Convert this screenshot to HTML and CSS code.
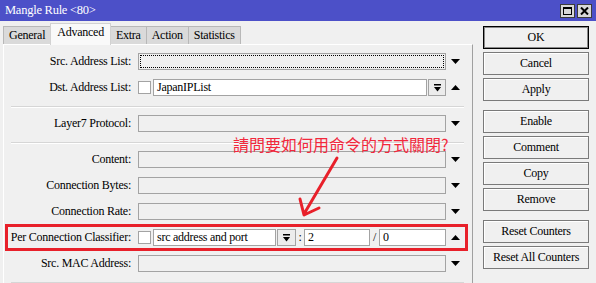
FILE: index.html
```html
<!DOCTYPE html>
<html lang="zh-Hant">
  <head>
    <meta charset="UTF-8" />
    <title>Mangle Rule &lt;80&gt;</title>
    <link rel="stylesheet" href="styles.css">
  </head>
  <body>
    <div class="window">
      <!-- 標題列 -->
      <div class="titlebar">
        <span class="title">Mangle Rule &lt;80&gt;</span>
        <div class="win-btns">
          <span class="win-btn">
            <svg width="9" height="8" viewBox="0 0 9 8"><rect x="0.5" y="0.5" width="8" height="7" fill="none" stroke="#000"/><rect x="0" y="0" width="9" height="2" fill="#000"/></svg>
          </span>
          <span class="win-btn">
            <svg width="9" height="8" viewBox="0 0 9 8"><path d="M1 0.5 L8 7.5 M8 0.5 L1 7.5" stroke="#000" stroke-width="2"/></svg>
          </span>
        </div>
      </div>

      <div class="main">
        <div class="left">
          <ul class="tabs">
            <li class="tab">General</li>
            <li class="tab active">Advanced</li>
            <li class="tab">Extra</li>
            <li class="tab">Action</li>
            <li class="tab">Statistics</li>
          </ul>

          <div class="panel">
            <div class="row">
              <label class="label">Src. Address List:</label>
              <div class="field">
                <span class="input focus"></span>
              </div>
              <span class="spin"><svg width="9" height="5" viewBox="0 0 9 5"><path d="M0 0 H9 L4.5 5 Z"/></svg></span>
            </div>
            <div class="row">
              <label class="label">Dst. Address List:</label>
              <div class="field">
                <span class="check"></span>
                <span class="input white">JapanIPList</span>
                <span class="drop"><svg width="7" height="8" viewBox="0 0 7 8"><rect x="0" y="0" width="7" height="1.5"/><path d="M0 3 H7 L3.5 7.5 Z"/></svg></span>
              </div>
              <span class="spin"><svg width="9" height="5" viewBox="0 0 9 5"><path d="M0 5 H9 L4.5 0 Z"/></svg></span>
            </div>

            <div class="sep"></div>

            <div class="row">
              <label class="label">Layer7 Protocol:</label>
              <div class="field">
                <span class="input"></span>
              </div>
              <span class="spin"><svg width="9" height="5" viewBox="0 0 9 5"><path d="M0 0 H9 L4.5 5 Z"/></svg></span>
            </div>

            <div class="sep"></div>

            <div class="row">
              <label class="label">Content:</label>
              <div class="field">
                <span class="input"></span>
              </div>
              <span class="spin"><svg width="9" height="5" viewBox="0 0 9 5"><path d="M0 0 H9 L4.5 5 Z"/></svg></span>
            </div>
            <div class="row">
              <label class="label">Connection Bytes:</label>
              <div class="field">
                <span class="input"></span>
              </div>
              <span class="spin"><svg width="9" height="5" viewBox="0 0 9 5"><path d="M0 0 H9 L4.5 5 Z"/></svg></span>
            </div>
            <div class="row">
              <label class="label">Connection Rate:</label>
              <div class="field">
                <span class="input"></span>
              </div>
              <span class="spin"><svg width="9" height="5" viewBox="0 0 9 5"><path d="M0 0 H9 L4.5 5 Z"/></svg></span>
            </div>
            <div class="row">
              <label class="label">Per Connection Classifier:</label>
              <div class="field">
                <span class="check"></span>
                <span class="input white pcc-type">src address and port</span>
                <span class="drop pcc-drop"><svg width="7" height="8" viewBox="0 0 7 8"><rect x="0" y="0" width="7" height="1.5"/><path d="M0 3 H7 L3.5 7.5 Z"/></svg></span>
                <span class="mark-char">:</span>
                <span class="input white pcc-num">2</span>
                <span class="mark-char slash">/</span>
                <span class="input white pcc-num">0</span>
              </div>
              <span class="spin"><svg width="9" height="5" viewBox="0 0 9 5"><path d="M0 5 H9 L4.5 0 Z"/></svg></span>
            </div>
            <div class="row">
              <label class="label">Src. MAC Address:</label>
              <div class="field">
                <span class="input"></span>
              </div>
              <span class="spin"><svg width="9" height="5" viewBox="0 0 9 5"><path d="M0 0 H9 L4.5 5 Z"/></svg></span>
            </div>

            <div class="sep"></div>
          </div>
        </div>

        <!-- 右側按鈕 -->
        <div class="side">
          <span class="btn default">OK</span>
          <span class="btn">Cancel</span>
          <span class="btn">Apply</span>
          <span class="btn group">Enable</span>
          <span class="btn">Comment</span>
          <span class="btn">Copy</span>
          <span class="btn">Remove</span>
          <span class="btn group">Reset Counters</span>
          <span class="btn">Reset All Counters</span>
        </div>
      </div>

      <!-- 標註 -->
      <div class="note">請問要如何用命令的方式關閉?</div>
      <div class="mark"></div>
      <svg class="arrow" width="596" height="283" viewBox="0 0 596 283">
        <path d="M337 158 L304 214 M300 199 L304 215 L319 208" fill="none" stroke="#e8202a" stroke-width="3" stroke-linecap="round" stroke-linejoin="round"/>
      </svg>
    </div>
  </body>
</html>
```

FILE: styles.css
```css
* {
  box-sizing: border-box;
}

ul {
  list-style: none;
  padding: 0;
  margin: 0;
}

body {
  margin: 0;
  width: 596px;
  height: 283px;
  overflow: hidden;
  background: #f0f0f0;
  font-family: "Liberation Serif", "Times New Roman", serif;
  font-size: 12px;
  letter-spacing: -0.25px;
  color: #000;
}

.window {
  position: relative;
  width: 596px;
  height: 283px;
}

/* 標題列 */
.titlebar {
  display: flex;
  align-items: center;
  height: 21px;
  padding: 0 4px 0 5px;
  background: #4c50c8;
  color: #fff;
  font-size: 12.5px;
}
.win-btns {
  display: flex;
  gap: 2px;
  margin-left: auto;
}
.win-btn {
  display: flex;
  align-items: center;
  justify-content: center;
  width: 15px;
  height: 14px;
  background: #d8d8d8;
  border: 1px solid #3c3c3c;
}

.main {
  display: flex;
}

.left {
  width: 470px;
  margin-left: 3px;
}

/* 分頁 */
.tabs {
  display: flex;
  align-items: flex-end;
  height: 23px;
}
.tab {
  height: 18px;
  padding: 0 5px;
  line-height: 17px;
  background: #dadada;
  border: 1px solid #b8b8b8;
  border-bottom: 0;
  margin-right: -1px;
}
.tab.active {
  position: relative;
  height: 22px;
  margin-bottom: -1px;
  padding: 0 6px;
  line-height: 17px;
  background: #f9f9f9;
  border-color: #d2d2d2;
}

.panel {
  height: 239px;
  padding-top: 4px;
  border-top: 1px solid #fff;
  border-left: 1px solid #fff;
  border-right: 1px solid #a0a0a0;
}

.row {
  display: flex;
  align-items: flex-start;
  height: 26px;
  padding-top: 4px;
}
.label {
  width: 127px;
  text-align: right;
  line-height: 17px;
  white-space: nowrap;
}
.field {
  display: flex;
  align-items: center;
  width: 308px;
  height: 17px;
  margin-left: 7px;
}
.input {
  flex: 1;
  height: 17px;
  padding-left: 3px;
  line-height: 15px;
  background: #f0f0f0;
  border: 1px solid #a3a3a3;
  white-space: nowrap;
}
.input.white {
  background: #fff;
}
.input.focus {
  outline: 1px dotted #000;
  outline-offset: -3px;
}
.check {
  width: 13px;
  height: 13px;
  margin-right: 2px;
  background: #fff;
  border: 1px solid #a3a3a3;
}
.drop {
  display: flex;
  align-items: center;
  justify-content: center;
  width: 18px;
  height: 17px;
  margin-left: 1px;
  background: #ececec;
  border: 1px solid #a3a3a3;
}
.spin {
  display: flex;
  align-items: center;
  width: 9px;
  height: 17px;
  margin-left: 5px;
}

/* Per Connection Classifier */
.pcc-type {
  flex: 0 0 123px;
}
.pcc-drop {
  width: 19px;
}
.pcc-num {
  flex: 0 0 66px;
}
.pcc-num:last-child {
  flex: 0 0 67px;
}
.mark-char {
  width: 8px;
  text-align: center;
}
.mark-char.slash {
  width: 9px;
}

.sep {
  height: 2px;
  margin: 5px 8px 3px 7px;
  border-top: 1px solid #d6d6d6;
  border-bottom: 1px solid #fff;
}

/* 右側按鈕 */
.side {
  display: flex;
  flex-direction: column;
  gap: 3px;
  width: 106px;
  margin-left: 10px;
  padding-top: 5px;
}
.btn {
  height: 23px;
  line-height: 21px;
  text-align: center;
  background: #f0f0f0;
  border: 1px solid #7a7a7a;
  box-shadow: inset 1px 1px #fff;
}
.btn.default {
  border-color: #000;
  box-shadow: inset 0 0 0 1px #8a8a8a;
}
.btn.group {
  margin-top: 6px;
}

/* 標註 */
.note {
  position: absolute;
  left: 233px;
  top: 134px;
  font-family: "Noto Sans CJK TC", sans-serif;
  font-size: 16px;
  line-height: 20px;
  letter-spacing: 0;
  color: #f2283c;
}
.mark {
  position: absolute;
  left: 5px;
  top: 224px;
  width: 463px;
  height: 27px;
  border: 3px solid #e8202a;
}
.arrow {
  position: absolute;
  left: 0;
  top: 0;
  pointer-events: none;
}
```
